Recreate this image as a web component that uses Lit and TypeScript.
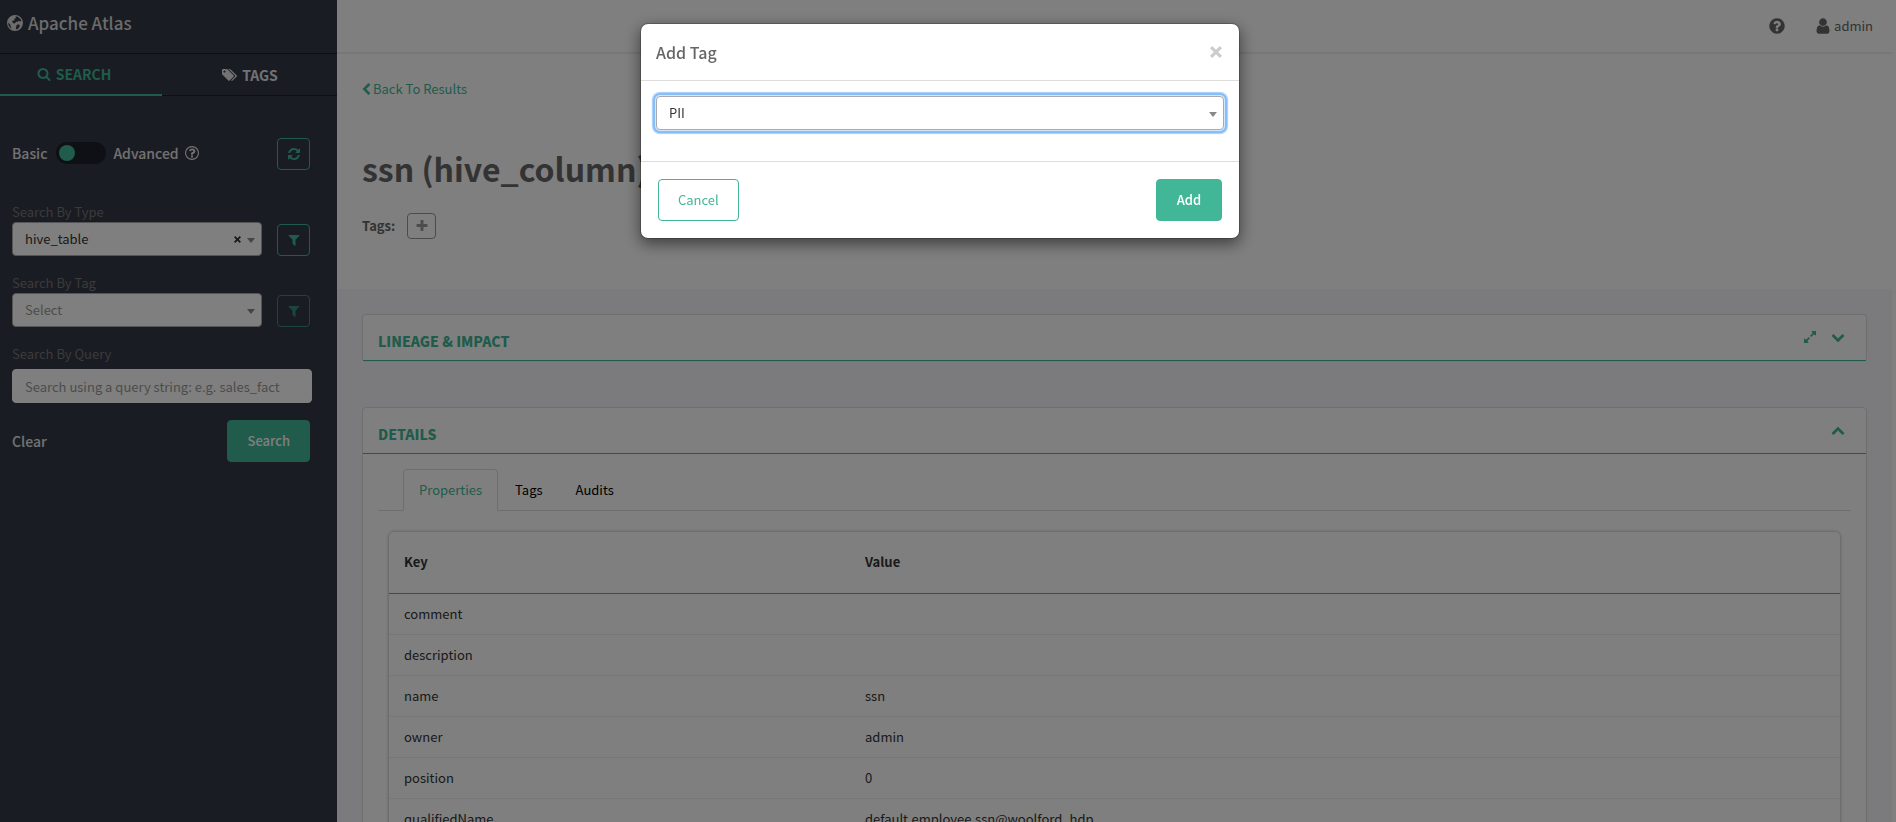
import { LitElement, html, css, svg } from "lit";
import { customElement, property, state } from "lit/decorators.js";

const ICONS: Record<string, { box: string; d: string }> = {
  search: { box: "0 0 1792 1792", d: "M1216 832q0-185-131.5-316.5t-316.5-131.5-316.5 131.5-131.5 316.5 131.5 316.5 316.5 131.5 316.5-131.5 131.5-316.5zm512 832q0 52-38 90t-90 38q-54 0-90-38l-343-342q-179 124-399 124-143 0-273.5-55.5t-225-150-150-225-55.5-273.5 55.5-273.5 150-225 225-150 273.5-55.5 273.5 55.5 225 150 150 225 55.5 273.5q0 220-124 399l343 343q37 37 37 90z" },
  tags: { box: "0 0 2048 1792", d: "M576 448q0-53-37.5-90.5t-90.5-37.5-90.5 37.5-37.5 90.5 37.5 90.5 90.5 37.5 90.5-37.5 37.5-90.5zm1067 576q0 53-37 90l-491 492q-39 37-91 37-53 0-90-37l-715-716q-38-37-64.5-101t-26.5-117v-416q0-52 38-90t90-38h416q53 0 117 26.5t102 64.5l715 714q37 39 37 91zm384 0q0 53-37 90l-491 492q-39 37-91 37-36 0-59-14t-53-45l470-470q37-37 37-90 0-52-37-91l-715-714q-38-38-102-64.5t-117-26.5h224q53 0 117 26.5t102 64.5l715 714q37 39 37 91z" },
  refresh: { box: "0 0 1792 1792", d: "M1639 1056q0 5-1 7-64 268-268 434.5t-478 166.5q-146 0-282.5-55t-243.5-157l-129 129q-19 19-45 19t-45-19-19-45v-448q0-26 19-45t45-19h448q26 0 45 19t19 45-19 45l-137 137q71 66 161 102t187 36q134 0 250-65t186-179q11-17 53-117 8-23 30-23h192q13 0 22.5 9.5t9.5 22.5zm25-800v448q0 26-19 45t-45 19h-448q-26 0-45-19t-19-45 19-45l138-138q-148-137-349-137-134 0-250 65t-186 179q-11 17-53 117-8 23-30 23h-199q-13 0-22.5-9.5t-9.5-22.5v-7q65-268 270-434.5t480-166.5q146 0 284 55.5t245 156.5l130-129q19-19 45-19t45 19 19 45z" },
  filter: { box: "0 0 1792 1792", d: "M1595 295q17 41-14 70l-493 493v742q0 42-39 59-13 5-25 5-27 0-45-19l-256-256q-19-19-19-45v-486l-493-493q-31-29-14-70 17-39 59-39h1280q42 0 59 39z" },
  help: { box: "0 0 1792 1792", d: "M1024 1376v-192q0-14-9-23t-23-9h-192q-14 0-23 9t-9 23v192q0 14 9 23t23 9h192q14 0 23-9t9-23zm256-672q0-88-55.5-163t-138.5-116-170-41q-243 0-371 213-15 24 8 42l132 100q7 6 19 6 16 0 25-12 53-68 86-92 34-24 86-24 48 0 85.5 26t37.5 59q0 38-20 61t-68 45q-63 28-115.5 86.5t-52.5 125.5v36q0 14 9 23t23 9h192q14 0 23-9t9-23q0-19 21.5-49.5t54.5-49.5q32-18 49-28.5t46-35 44.5-48 28-60.5 12.5-81zm384 192q0 209-103 385.5t-279.5 279.5-385.5 103-385.5-103-279.5-279.5-103-385.5 103-385.5 279.5-279.5 385.5-103 385.5 103 279.5 279.5 103 385.5z" },
  helpOutline: { box: "128 128 1536 1536", d: "M1008 1200v160q0 14-9 23t-23 9h-160q-14 0-23-9t-9-23v-160q0-14 9-23t23-9h160q14 0 23 9t9 23zm256-496q0 50-15 90t-45.5 69-52 44-59.5 36q-32 18-46.500 28t-26 24-11.500 29v32q0 14-9 23t-23 9h-160q-14 0-23-9t-9-23v-68q0-35 10.500-64.500t24-47.500 39-35.500 41-25.500 44.500-21q53-25 75-43t22-49q0-42-43.500-71.500t-95.500-29.500q-56 0-95 27-29 20-80 83-9 12-25 12-11 0-19-6l-108-82q-10-7-12-20t5-23q122-192 349-192 129 0 238.500 89.500t109.500 214.500zm-368-448q-130 0-248.500 51t-204 136.500-136.500 204-51 248.500 51 248.500 136.500 204 204 136.500 248.500 51 248.500-51 204-136.500 136.500-204 51-248.500-51-248.500-136.500-204-204-136.500-248.500-51zm768 640q0 209-103 385.500t-279.500 279.500-385.500 103-385.500-103-279.500-279.500-103-385.500 103-385.500 279.500-279.500 385.500-103 385.500 103 279.500 279.500 103 385.500z" },
  user: { box: "0 0 1792 1792", d: "M1536 1399q0 109-62.5 187t-150.5 78h-854q-88 0-150.5-78t-62.5-187q0-85 8.5-160.5t31.5-152 58.5-131 94-89 134.5-34.5q131 128 313 128t313-128q76 0 134.5 34.5t94 89 58.5 131 31.500 152 8.500 160.500zm-256-887q0 159-112.500 271.500t-271.500 112.500-271.500-112.500-112.500-271.500 112.500-271.500 271.500-112.500 271.500 112.500 112.500 271.500z" },
  left: { box: "360 0 1152 1792", d: "M1427 301l-531 531 531 531q19 19 19 45t-19 45l-166 166q-19 19-45 19t-45-19l-742-742q-19-19-19-45t19-45l742-742q19-19 45-19t45 19l166 166q19 19 19 45t-19 45z" },
  plus: { box: "0 0 1792 1792", d: "M1600 736v192q0 40-28 68t-68 28h-416v416q0 40-28 68t-68 28h-192q-40 0-68-28t-28-68v-416h-416q-40 0-68-28t-28-68v-192q0-40 28-68t68-28h416v-416q0-40 28-68t68-28h192q40 0 68 28t28 68v416h416q40 0 68 28t28 68z" },
  down: { box: "0 0 1792 1792", d: "M1683 808l-742 741q-19 19-45 19t-45-19l-742-741q-19-19-19-45.5t19-45.5l166-165q19-19 45-19t45 19l531 531 531-531q19-19 45-19t45 19l166 165q19 19 19 45.5t-19 45.5z" },
  up: { box: "0 0 1792 1792", d: "M1683 1331l-166 165q-19 19-45 19t-45-19l-531-531-531 531q-19 19-45 19t-45-19l-166-165q-19-19-19-45.5t19-45.500l742-741q19-19 45-19t45 19l742 741q19 19 19 45.500t-19 45.500z" },
  expand: { box: "0 0 1792 1792", d: "M883 1056q0 13-10 23l-332 332 144 144q19 19 19 45t-19 45-45 19h-448q-26 0-45-19t-19-45v-448q0-26 19-45t45-19 45 19l144 144 332-332q10-10 23-10t23 10l114 114q10 10 10 23zm781-864v448q0 26-19 45t-45 19-45-19l-144-144-332 332q-10 10-23 10t-23-10l-114-114q-10-10-10-23t10-23l332-332-144-144q-19-19-19-45t19-45 45-19h448q26 0 45 19t19 45z" },
  caret: { box: "0 0 8 5", d: "M0 0h8l-4 5z" },
  times: { box: "0 0 12 12", d: "M2.200 0 6 3.800 9.800 0 12 2.200 8.200 6 12 9.800 9.800 12 6 8.200 2.200 12 0 9.800 3.800 6 0 2.200z" },
  globe: { box: "0 0 16 16", d: "M8 0a8 8 0 1 1 0 16A8 8 0 0 1 8 0zM8.600 1.300 10.800 1.700 13.500 3.900 14.400 6 13 6.400 11.800 5.600 10.600 6.900 9.400 6.400 8 8.200 6.600 8.600 6 7.600 4.900 7 6 5.600 7.600 5.400 7.200 4.100 8.900 3zM1.300 7.600 3.200 9.400 3.500 11.200 4.800 13.700 3 12.600 1.600 10.400zM9.600 9.900 11.600 9.200 12.800 10.600 12.200 12.400 9.800 14.400 8.700 13.600 9.300 12z" },
};

@customElement("atlas-icon")
class AtlasIcon extends LitElement {
  @property() name = "";
  static styles = css`
    :host { display: inline-flex; flex: none; width: 14px; height: 14px; }
    svg { width: 100%; height: 100%; fill: currentColor; fill-rule: evenodd; display: block; }
  `;
  render() {
    const icon = ICONS[this.name];
    return html`<svg viewBox=${icon.box} aria-hidden="true">${svg`<path d=${icon.d}></path>`}</svg>`;
  }
}

const PROPERTIES: [string, string][] = [
  ["comment", ""],
  ["description", ""],
  ["name", "ssn"],
  ["owner", "admin"],
  ["position", "0"],
  ["qualifiedName", "default.employee.ssn@woolford_hdp"],
];

@customElement("app-root")
class AppRoot extends LitElement {
  @state() private modalOpen = true;

  static styles = css`
    :host {
      --green: #41b797;
      --line: #dddddd;
      display: block;
      height: 100vh;
      overflow: hidden;
      background: #fff;
      color: #333;
      font: 13px/20px "Noto Sans CJK SC", "Noto Sans CJK JP", "Open Sans", sans-serif;
    }
    *, *::before, *::after { box-sizing: border-box; }
    button, input, select { font: inherit; margin: 0; }
    button { cursor: pointer; padding: 0; }
    a { color: inherit; text-decoration: none; }
    h1, h2, h3, p { margin: 0; }

    .shell { display: flex; height: 100%; }

    .sidebar { width: 337px; flex: none; background: #343846; color: #fff; overflow: hidden; }
    .brand {
      display: flex; align-items: center; gap: 5px; height: 54px; padding: 0 7px 8px;
      border-bottom: 1px solid #1c1f28; color: #d8d8d8; font-size: 17px; font-weight: 500;
    }
    .brand atlas-icon { width: 16px; height: 16px; }
    .side-tabs { display: flex; height: 42px; border-bottom: 1px solid #1c1f28; }
    .side-tab {
      display: flex; flex: 1; align-items: center; justify-content: center; gap: 5px;
      font-size: 14px; font-weight: 700; color: #e4e4e4;
    }
    .side-tab.active {
      flex: none; width: 162px; height: 42px; padding-right: 14px; color: var(--green); border-bottom: 2px solid var(--green);
    }
    .side-tab:not(.active) atlas-icon { width: 16px; }

    .search-form { padding: 42px 27px 0 12px; }
    .mode { display: flex; justify-content: space-between; height: 33px; }
    .mode-switch { display: flex; align-items: center; height: 29px; color: #e4e4e4; font-size: 14px; font-weight: 500; }
    .mode-switch atlas-icon { margin-left: 6px; }
    .toggle {
      appearance: none; width: 50px; height: 22px; margin: 0 7px 0 9px; padding: 3px;
      border-radius: 11px; background: #1f212a; cursor: pointer;
    }
    .toggle::before { content: ""; display: block; width: 16px; height: 16px; border-radius: 50%; background: var(--green); }
    .toggle:checked::before { margin-left: auto; }
    .outlined {
      display: flex; align-items: center; justify-content: center; width: 33px; height: 32px;
      border: 1px solid var(--green); border-radius: 4px; background: none; color: var(--green);
    }
    .outlined:disabled { opacity: 0.65; }
    .field { margin-top: 17px; }
    .mode + .field { margin-top: 31px; }
    .field label { display: block; height: 20px; color: #777; }
    .field-row { display: flex; align-items: end; gap: 15px; }
    .picker { position: relative; display: flex; flex: 1; }
    .picker select {
      appearance: none; width: 100%; height: 34px; padding: 0 34px 0 12px; border: 1px solid #aaa;
      border-radius: 4px; background: #fff; color: #333; line-height: 32px; outline: none;
    }
    .picker select.empty { color: #999; }
    .picker .caret { position: absolute; right: 7px; top: 16px; width: 8px; height: 5px; color: #888; pointer-events: none; }
    .picker .reset {
      position: absolute; right: 21px; top: 14px; display: flex; border: 0; background: none; color: #333;
    }
    .picker .reset atlas-icon { width: 7px; height: 7px; }
    .query {
      display: block; width: calc(100% + 2px); height: 34px; margin-top: 5px; padding: 0 12px;
      border: 1px solid #fff; border-radius: 4px; background: #fff; color: #333; outline: none;
    }
    .query::placeholder { color: #999; opacity: 1; }
    .form-actions { display: flex; justify-content: space-between; align-items: center; margin-top: 17px; }
    .clear { font-size: 14px; font-weight: 500; color: #e4e4e4; }

    .btn { min-width: 66px; height: 42px; padding: 0 19px; border: 1px solid var(--green); border-radius: 4px; font-weight: 500; }
    .btn.solid { background: var(--green); color: #fff; }
    .btn.hollow { background: #fff; color: var(--green); font-weight: 400; }

    .main { flex: 1; min-width: 0; margin-right: 4px; display: flex; flex-direction: column; overflow: hidden; }
    .topbar {
      display: flex; flex: none; justify-content: flex-end; align-items: center; gap: 28px; height: 54px;
      padding: 0 19px 0 0; border-bottom: 2px solid #eee; color: #666;
    }
    .topbar a { display: flex; align-items: center; gap: 2px; }
    .topbar atlas-icon { width: 18px; height: 18px; }
    .topbar a { padding-bottom: 1px; }
    .entity { flex: none; height: 235px; padding: 25px 25px 0; }
    .back { display: inline-flex; align-items: center; gap: 2px; color: var(--green); }
    .back atlas-icon { width: 9px; height: 13px; }
    .entity h1 { margin-top: 42px; font-size: 32px; line-height: 50px; font-weight: 700; color: #666; }
    .tag-line { display: flex; align-items: center; gap: 12px; margin-top: 20px; font-weight: 700; color: #666; }
    .add-tag {
      display: flex; align-items: center; justify-content: center; width: 29px; height: 26px;
      border: 1px solid #999; border-radius: 4px; background: none; color: #999;
    }

    .content { display: flex; flex: 1 0 auto; flex-direction: column; gap: 46px; padding: 25px 25px 0; background: #f6f7fb; }
    .panel { border: 1px solid var(--line); border-radius: 4px; background: #fff; box-shadow: 0 1px 1px rgba(0, 0, 0, 0.05); }
    .panel.closed { border-bottom: 0; }
    .panel-head {
      display: flex; align-items: center; gap: 14px; height: 46px; padding: 6px 21px 0 15px;
      border-bottom: 1px solid var(--green); color: var(--green);
    }
    .panel-head h2 { flex: 1; font-size: 14px; font-weight: 900; }
    .icon-btn { display: flex; border: 0; background: none; color: inherit; }
    .panel-head .icon-btn { padding-bottom: 8px; }
    .tabs { display: flex; margin: 15px 15px 0; padding-left: 25px; border-bottom: 1px solid var(--line); }
    .tabs button { height: 42px; margin: 0 1px -1px 0; padding: 0 15px; border: 1px solid transparent; background: none; color: #000; }
    .tabs button.active {
      border-color: var(--line); border-bottom-color: #fff; border-radius: 4px 4px 0 0; background: #fff; color: var(--green);
    }
    .sheet { margin: 20px 25px 0; border: 1px solid var(--line); border-radius: 6px 6px 0 0; box-shadow: 0 0 3px rgba(0, 0, 0, 0.2); }
    table { width: 100%; border-collapse: collapse; table-layout: fixed; }
    th, td { height: 41px; padding: 0 15px; text-align: left; border-bottom: 1px solid #eee; }
    th { height: 61px; border-bottom-color: var(--green); font-weight: 700; }
    th:first-child { width: 461px; }

    .backdrop {
      position: fixed; inset: 0; display: flex; justify-content: center; align-items: flex-start;
      padding: 23px 16px 23px 0; background: rgba(0, 0, 0, 0.5);
    }
    .dialog { width: 600px; max-width: 100%; border: 1px solid rgba(0, 0, 0, 0.2); border-radius: 8px; background: #fff; background-clip: padding-box; box-shadow: 0 5px 15px rgba(0, 0, 0, 0.5); }
    .dialog-head { display: flex; align-items: center; justify-content: space-between; height: 57px; padding: 0 17px 0 15px; border-bottom: 1px solid var(--line); }
    .dialog-head h3 { font-size: 16px; font-weight: 500; color: #666; }
    .dialog-head .icon-btn { color: #ccc; }
    .dialog-head atlas-icon { width: 12px; height: 12px; }
    .dialog-body { padding: 15px 15px 31px; border-bottom: 1px solid var(--line); }
    .dialog-body .picker select { box-shadow: 0 0 0 1px #d5e7fb, 0 0 0 3px #86bdfb, 0 0 1px 4px #a5cefb; }
    .dialog-foot { display: flex; justify-content: space-between; padding: 17px; }
  `;

  private close() {
    this.modalOpen = false;
  }

  private renderSidebar() {
    return html`
      <aside class="sidebar">
        <header class="brand"><atlas-icon name="globe"></atlas-icon><span>Apache Atlas</span></header>
        <nav class="side-tabs">
          <a class="side-tab active" href="#search"><atlas-icon name="search"></atlas-icon>SEARCH</a>
          <a class="side-tab" href="#tags"><atlas-icon name="tags"></atlas-icon>TAGS</a>
        </nav>
        <form class="search-form" @submit=${(e: Event) => e.preventDefault()}>
          <div class="mode">
            <div class="mode-switch">
              <label for="mode">Basic</label>
              <input class="toggle" type="checkbox" id="mode" />
              <label for="mode">Advanced</label>
              <atlas-icon name="helpOutline"></atlas-icon>
            </div>
            <button type="button" class="outlined" aria-label="Refresh"><atlas-icon name="refresh"></atlas-icon></button>
          </div>
          <div class="field">
            <label for="by-type">Search By Type</label>
            <div class="field-row">
              <div class="picker">
                <select id="by-type"><option>hive_table</option></select>
                <button type="button" class="reset" aria-label="Clear type"><atlas-icon name="times"></atlas-icon></button>
                <atlas-icon class="caret" name="caret"></atlas-icon>
              </div>
              <button type="button" class="outlined" aria-label="Filter by type"><atlas-icon name="filter"></atlas-icon></button>
            </div>
          </div>
          <div class="field">
            <label for="by-tag">Search By Tag</label>
            <div class="field-row">
              <div class="picker">
                <select id="by-tag" class="empty"><option>Select</option></select>
                <atlas-icon class="caret" name="caret"></atlas-icon>
              </div>
              <button type="button" class="outlined" disabled aria-label="Filter by tag"><atlas-icon name="filter"></atlas-icon></button>
            </div>
          </div>
          <div class="field">
            <label for="by-query">Search By Query</label>
            <input class="query" id="by-query" type="text" placeholder="Search using a query string: e.g. sales_fact" />
          </div>
          <div class="form-actions">
            <a class="clear" href="#clear">Clear</a>
            <button class="btn solid" type="submit">Search</button>
          </div>
        </form>
      </aside>
    `;
  }

  private renderModal() {
    if (!this.modalOpen) return null;
    return html`
      <div class="backdrop">
        <div class="dialog" role="dialog" aria-modal="true" aria-labelledby="dialog-title">
          <div class="dialog-head">
            <h3 id="dialog-title">Add Tag</h3>
            <button class="icon-btn" aria-label="Close" @click=${this.close}><atlas-icon name="times"></atlas-icon></button>
          </div>
          <div class="dialog-body">
            <div class="picker">
              <select aria-label="Tag"><option>PII</option></select>
              <atlas-icon class="caret" name="caret"></atlas-icon>
            </div>
          </div>
          <div class="dialog-foot">
            <button class="btn hollow" @click=${this.close}>Cancel</button>
            <button class="btn solid" @click=${this.close}>Add</button>
          </div>
        </div>
      </div>
    `;
  }

  render() {
    return html`
      <div class="shell">
        ${this.renderSidebar()}
        <main class="main">
          <header class="topbar">
            <a href="#help" aria-label="Help"><atlas-icon name="help"></atlas-icon></a>
            <a href="#account"><atlas-icon name="user"></atlas-icon>admin</a>
          </header>
          <section class="entity">
            <a class="back" href="#results"><atlas-icon name="left"></atlas-icon>Back To Results</a>
            <h1>ssn (hive_column)</h1>
            <div class="tag-line">
              <span>Tags:</span>
              <button class="add-tag" aria-label="Add tag"><atlas-icon name="plus"></atlas-icon></button>
            </div>
          </section>
          <div class="content">
            <section class="panel closed">
              <div class="panel-head">
                <h2>LINEAGE &amp; IMPACT</h2>
                <button class="icon-btn" aria-label="Full screen"><atlas-icon name="expand"></atlas-icon></button>
                <button class="icon-btn" aria-label="Expand lineage"><atlas-icon name="down"></atlas-icon></button>
              </div>
            </section>
            <section class="panel">
              <div class="panel-head">
                <h2>DETAILS</h2>
                <button class="icon-btn" aria-label="Collapse details"><atlas-icon name="up"></atlas-icon></button>
              </div>
              <div class="tabs">
                <button class="active">Properties</button>
                <button>Tags</button>
                <button>Audits</button>
              </div>
              <div class="sheet">
                <table>
                  <thead><tr><th>Key</th><th>Value</th></tr></thead>
                  <tbody>
                    ${PROPERTIES.map(([key, value]) => html`<tr><td>${key}</td><td>${value}</td></tr>`)}
                  </tbody>
                </table>
              </div>
            </section>
          </div>
        </main>
      </div>
      ${this.renderModal()}
    `;
  }
}
